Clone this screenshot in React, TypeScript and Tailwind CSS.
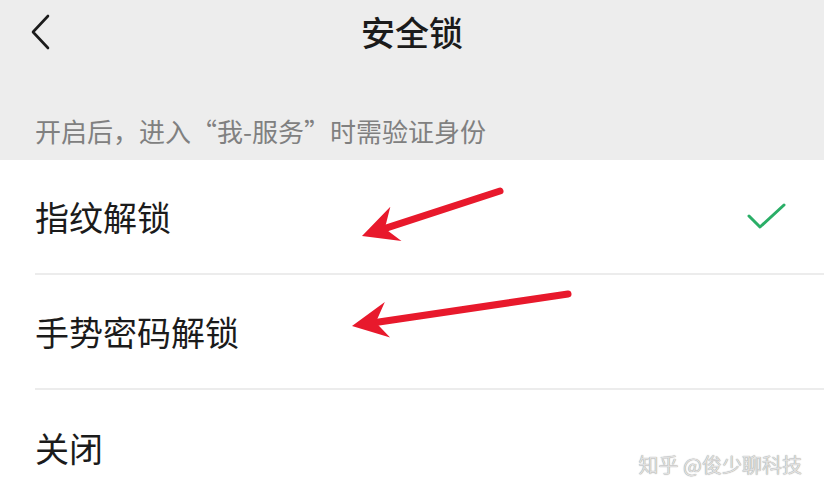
import React from 'react'

const font = { fontFamily: '"Noto Sans CJK SC", "Noto Sans", sans-serif' }

function Row({ label, checked, last }: { label: string; checked?: boolean; last?: boolean }) {
  return (
    <div className="pl-[35px]">
      <div
        className={`flex h-[115px] items-center justify-between pr-[36px] ${
          last ? '' : 'border-b-2 border-[#ececec]'
        }`}
      >
        <span className="text-[34px] leading-none text-[#1b1b1b]">{label}</span>
        {checked && (
          <svg width="42" height="32" viewBox="0 0 42 32" fill="none">
            <path d="M3 15 L14 26 L38 4" stroke="#2aae67" strokeWidth="3" strokeLinecap="round" strokeLinejoin="round" />
          </svg>
        )}
      </div>
    </div>
  )
}

function Arrow({ x1, y1, x2, y2 }: { x1: number; y1: number; x2: number; y2: number }) {
  // arrow from tail (x1,y1) to tip (x2,y2)
  const dx = x2 - x1
  const dy = y2 - y1
  const len = Math.hypot(dx, dy)
  const ux = dx / len
  const uy = dy / len
  const bx = x2 - ux * 36
  const by = y2 - uy * 36
  const nx = -uy
  const ny = ux
  const head = `M${x2} ${y2} L${bx + nx * 19} ${by + ny * 19} L${x2 - ux * 24} ${y2 - uy * 24} L${bx - nx * 17} ${by - ny * 17} Z`
  return (
    <g>
      <line x1={x1} y1={y1} x2={x2 - ux * 22} y2={y2 - uy * 22} stroke="#e8192c" strokeWidth="7" strokeLinecap="round" />
      <path d={head} fill="#e8192c" />
    </g>
  )
}

export default function App() {
  return (
    <div className="relative h-[500px] w-[824px] overflow-hidden bg-white" style={font}>
      <div className="bg-[#ededed]">
        <div className="relative flex h-[64px] items-center justify-center">
          <svg className="absolute left-[28px] top-[13px]" width="24" height="38" viewBox="0 0 24 38" fill="none">
            <path d="M20 3 L5 19 L20 35" stroke="#1b1b1b" strokeWidth="2.6" strokeLinecap="round" strokeLinejoin="round" />
          </svg>
          <span className="text-[34px] font-medium leading-none text-[#1b1b1b]">安全锁</span>
        </div>
        <div className="flex h-[96px] items-center pl-[35px] pt-[38px]">
          <span className="text-[26px] leading-none text-[#808080]">开启后，进入“我-服务”时需验证身份</span>
        </div>
      </div>

      <Row label="指纹解锁" checked />
      <Row label="手势密码解锁" />
      <Row label="关闭" last />

      <svg className="pointer-events-none absolute left-0 top-0" width="824" height="500">
        <Arrow x1={500} y1={191} x2={362} y2={236} />
        <Arrow x1={568} y1={294} x2={352} y2={326} />
      </svg>

      <div
        className="absolute right-[22px] top-[455px] text-[20px] leading-none text-[#e0e0e0]"
        style={{ textShadow: '0 0 1px #7a7a7a' }}
      >
        知乎 @俊少聊科技
      </div>
    </div>
  )
}
